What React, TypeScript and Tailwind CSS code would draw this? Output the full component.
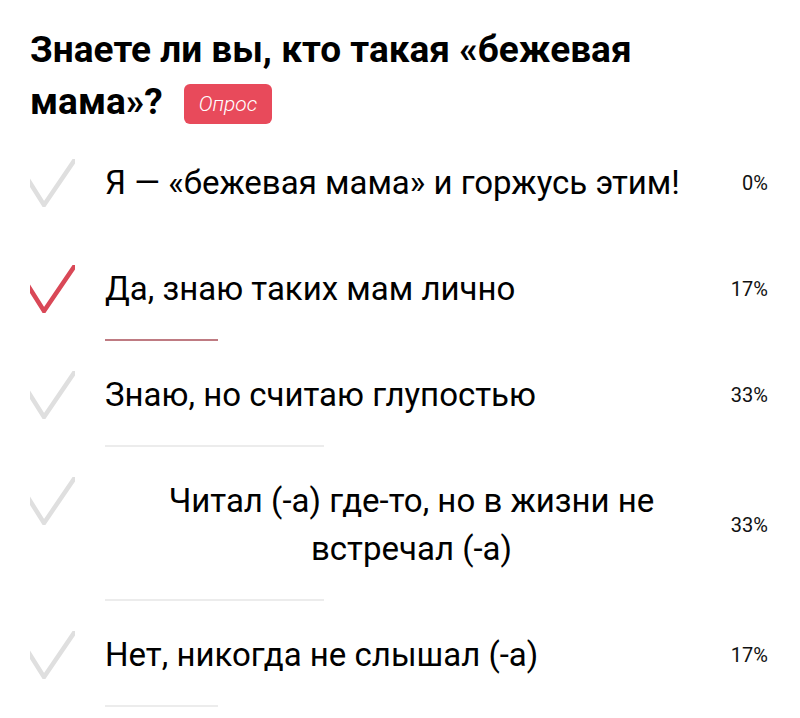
import React from 'react';

type Option = {
  text: React.ReactNode;
  pct: number;
  selected?: boolean;
  center?: boolean;
};

const options: Option[] = [
  { text: 'Я — «бежевая мама» и горжусь этим!', pct: 0 },
  { text: 'Да, знаю таких мам лично', pct: 17, selected: true },
  { text: 'Знаю, но считаю глупостью', pct: 33 },
  {
    text: (
      <>
        Читал (-а) где-то, но в жизни не
        <br />
        встречал (-а)
      </>
    ),
    pct: 33,
    center: true,
  },
  { text: 'Нет, никогда не слышал (-а)', pct: 17 },
];

function Check({ active }: { active?: boolean }) {
  return (
    <svg width="45" height="48" viewBox="0 0 45 48" className="shrink-0">
      <polyline
        points="-3,19 14,46 48,-4"
        fill="none"
        stroke={active ? '#d94857' : '#dfdfdf'}
        strokeWidth="4.5"
        strokeLinejoin="miter"
      />
    </svg>
  );
}

function PollRow({ option }: { option: Option }) {
  return (
    <div className="flex items-start">
      <Check active={option.selected} />
      <div className="ml-[30px] flex-1">
        <div className="flex items-center">
          <div
            className={
              'flex-1 text-[33px] leading-[48px] text-black ' +
              (option.center ? 'text-center' : 'text-left')
            }
          >
            {option.text}
          </div>
          <div className="w-[50px] text-right text-[20px] text-[#111]">{option.pct}%</div>
        </div>
        <div className="mt-[26px] mb-[30px] h-[2px]">
          <div
            className={'h-[2px] ' + (option.selected ? 'bg-[#bf7b82]' : 'bg-[#ececec]')}
            style={{ width: `${option.pct}%` }}
          />
        </div>
      </div>
    </div>
  );
}

export default function App() {
  return (
    <div className="min-h-[718px] bg-white pl-[30px] pr-[32px] pt-[24px] font-['Roboto',sans-serif]">
      <h1 className="text-[37px] font-bold leading-[52px] text-black">
        Знаете ли вы, кто такая «бежевая мама»?
        <span className="ml-[21px] inline-flex h-[40px] items-center rounded-[6px] bg-[#e84a5b] px-[15px] align-middle text-[21px] font-light italic leading-none text-white">
          Опрос
        </span>
      </h1>
      <div className="mt-[31px]">
        {options.map((o, i) => (
          <PollRow key={i} option={o} />
        ))}
      </div>
    </div>
  );
}
